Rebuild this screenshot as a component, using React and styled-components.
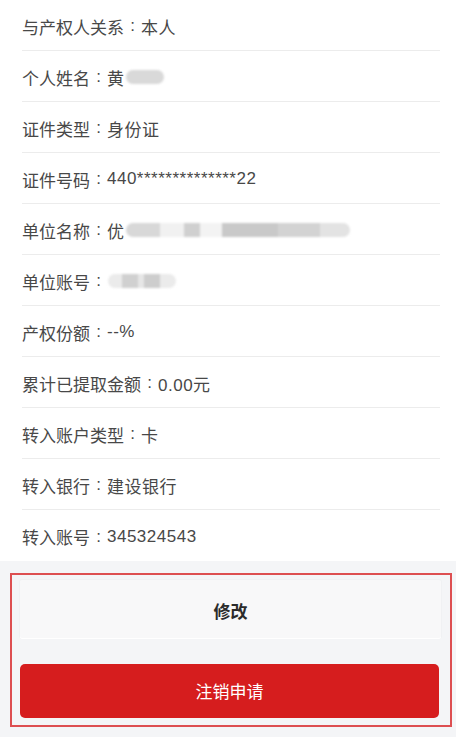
import React from "react";
import styled, { createGlobalStyle } from "styled-components";

const rows = [
  { label: "与产权人关系", value: "本人" },
  { label: "个人姓名", value: "黄", blur: [{ w: 38, shade: "#d9d9d9" }] },
  { label: "证件类型", value: "身份证" },
  { label: "证件号码", value: "440**************22" },
  {
    label: "单位名称",
    value: "优",
    blur: [
      { w: 34, shade: "#d8d8d8" },
      { w: 24, shade: "#f1f1f1" },
      { w: 16, shade: "#d0d0d0" },
      { w: 22, shade: "#f3f3f3" },
      { w: 56, shade: "#c9c9c9" },
      { w: 42, shade: "#d3d3d3" },
      { w: 30, shade: "#e3e3e3" },
    ],
  },
  {
    label: "单位账号",
    value: "",
    blur: [
      { w: 14, shade: "#ebebeb" },
      { w: 16, shade: "#d0d0d0" },
      { w: 6, shade: "#e6e6e6" },
      { w: 16, shade: "#cdcdcd" },
      { w: 16, shade: "#ebebeb" },
    ],
  },
  { label: "产权份额", value: "--%" },
  { label: "累计已提取金额", value: "0.00元" },
  { label: "转入账户类型", value: "卡" },
  { label: "转入银行", value: "建设银行" },
  { label: "转入账号", value: "345324543", last: true },
];

const GlobalStyle = createGlobalStyle`
  html, body {
    margin: 0;
    padding: 0;
    background: #ffffff;
  }
  body {
    font-family: "Liberation Sans", "Noto Sans CJK SC", sans-serif;
    color: #333333;
  }
`;

const Page = styled.div`
  width: 456px;
  height: 737px;
  display: flex;
  flex-direction: column;
  overflow: hidden;
`;

const List = styled.div`
  background: #ffffff;
  padding: 0 16px 0 22px;
`;

const Row = styled.div`
  height: 51px;
  box-sizing: border-box;
  padding-top: 2px;
  display: flex;
  align-items: center;
  font-size: 17px;
  color: #484848;
  white-space: nowrap;
  border-bottom: ${(p) => (p.last ? "none" : "1px solid #ececec")};
`;

const Colon = styled.span`
  display: inline-block;
  width: 17px;
  text-align: center;
`;

const Value = styled.span`
  letter-spacing: 0.5px;
`;

const Blur = styled.span`
  display: inline-flex;
  height: 16px;
  align-items: center;
  filter: blur(1.2px);
  margin-left: 1px;
`;

const BlurBit = styled.span`
  display: inline-block;
  height: 14px;
  background: ${(p) => p.shade};
  &:first-child {
    border-radius: 7px 0 0 7px;
  }
  &:last-child {
    border-radius: 0 7px 7px 0;
  }
  &:only-child {
    border-radius: 7px;
  }
`;

const Footer = styled.div`
  flex: 1;
  background: #f4f5f7;
  padding: 12px 4px 10px 10px;
`;

const Frame = styled.div`
  border: 2.5px solid #dd4f51;
  padding: 5px 9px 7px 8px;
  display: flex;
  flex-direction: column;
`;

const Button = styled.button`
  height: ${(p) => (p.danger ? "54px" : "58px")};
  margin-top: ${(p) => (p.danger ? "26px" : "0")};
  margin-right: ${(p) => (p.danger ? "2px" : "0")};
  padding-top: ${(p) => (p.danger ? "0" : "3px")};
  border: none;
  border-radius: ${(p) => (p.danger ? "5px" : "2px")};
  background: ${(p) => (p.danger ? "#d61d1e" : "#f8f8f9")};
  box-shadow: ${(p) => (p.danger ? "none" : "0 1px 0 #ffffff, 0 0 0 1px #f0f1f3")};
  color: ${(p) => (p.danger ? "#ffffff" : "#2b2b2b")};
  font-family: "Noto Sans CJK SC", sans-serif;
  font-size: 17px;
  font-weight: ${(p) => (p.danger ? 400 : 700)};
  cursor: pointer;
`;

const App = () => {
  return (
    <Page>
      <GlobalStyle />
      <List>
        {rows.map((r) => (
          <Row key={r.label} last={r.last}>
            <span>{r.label}</span>
            <Colon>:</Colon>
            <Value>{r.value}</Value>
            {r.blur && (
              <Blur>
                {r.blur.map((b, i) => (
                  <BlurBit key={i} shade={b.shade} style={{ width: b.w }} />
                ))}
              </Blur>
            )}
          </Row>
        ))}
      </List>
      <Footer>
        <Frame>
          <Button>修改</Button>
          <Button danger>注销申请</Button>
        </Frame>
      </Footer>
    </Page>
  );
};

export default App;
